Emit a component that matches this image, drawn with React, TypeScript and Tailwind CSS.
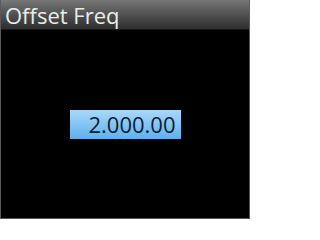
export default function App() {
  return (
    <div className="w-[250px] h-[219px] bg-black flex flex-col border-l border-r border-b border-[#5a5a5a] font-['Open_Sans',sans-serif]">
      <div className="h-[30px] shrink-0 bg-gradient-to-b from-[#777777] to-[#2e2e2e] border-b border-[#1a1a1a] flex items-center pl-[4px]">
        <span className="text-[22px] leading-none text-[#ececec]">Offset Freq</span>
      </div>
      <div className="flex-1 flex items-center justify-center pl-[0px]">
        <div className="w-[111px] h-[29px] bg-gradient-to-b from-[#a8d8fb] to-[#5eb0ec] flex items-center justify-end pr-[5px]">
          <span className="text-[22px] leading-none text-[#0b1c33]">2.000.00</span>
        </div>
      </div>
    </div>
  );
}
